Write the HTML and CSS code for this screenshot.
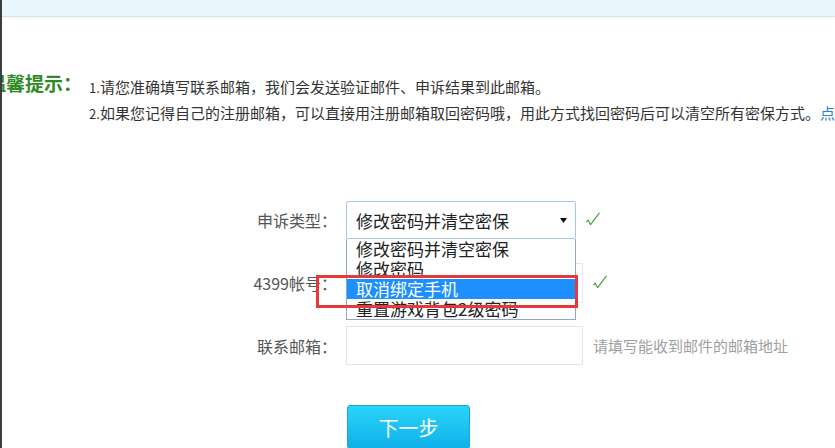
FILE: index.html
```html
<!DOCTYPE html>
<html lang="zh-CN">
<head>
<meta charset="utf-8">
<title>申诉</title>
<link rel="stylesheet" href="styles.css">
</head>
<body>
<div class="page">
  <div class="topbar"></div>
  <div class="tips">
    <div class="tips-title">温馨提示：</div>
    <ul class="tips-list">
      <li><span class="num">1.</span>请您准确填写联系邮箱，我们会发送验证邮件、申诉结果到此邮箱。</li>
      <li><span class="num">2.</span>如果您记得自己的注册邮箱，可以直接用注册邮箱取回密码哦，用此方式找回密码后可以清空所有密保方式。<a class="link">点击</a></li>
    </ul>
  </div>
  <form class="form">
    <div class="row row-type">
      <label class="label">申诉类型：</label>
      <div class="select-wrap">
        <div class="select">
          <span>修改密码并清空密保</span>
          <svg class="arrow" width="7" height="5" viewBox="0 0 7 5"><path d="M0 0H7L3.5 5Z" fill="#111"/></svg>
        </div>
        <ul class="dropdown">
          <li>修改密码并清空密保</li>
          <li>修改密码</li>
          <li class="active">取消绑定手机</li>
          <li>重置游戏背包2级密码</li>
        </ul>
        <div class="highlight-box"></div>
      </div>
      <svg class="check" width="14" height="14" viewBox="0 0 14 14"><path d="M0.8 9.5 L2.2 8.3 L4.6 12.6 L13.2 1.2" fill="none" stroke="#48a048" stroke-width="1.2" stroke-linecap="round" stroke-linejoin="round"/></svg>
    </div>
    <div class="row row-account">
      <label class="label">4399帐号：</label>
      <div class="input"></div>
      <svg class="check" width="14" height="14" viewBox="0 0 14 14"><path d="M0.8 9.5 L2.2 8.3 L4.6 12.6 L13.2 1.2" fill="none" stroke="#48a048" stroke-width="1.2" stroke-linecap="round" stroke-linejoin="round"/></svg>
    </div>
    <div class="row row-mail">
      <label class="label">联系邮箱：</label>
      <div class="input"></div>
      <span class="hint">请填写能收到邮件的邮箱地址</span>
    </div>
    <div class="row row-btn">
      <span class="label"></span>
      <button type="button" class="btn">下一步</button>
    </div>
  </form>
</div>
</body>
</html>
```
FILE: styles.css
```css
html, body {
  margin: 0;
  padding: 0;
  background: #fff;
  overflow: hidden;
}
body {
  font-family: "Noto Sans CJK SC", "Noto Sans", sans-serif;
  color: #333;
}
.page {
  height: 448px;
  border-left: 2px solid #3d3d3d;
  overflow: hidden;
}
.topbar {
  height: 16px;
  background: #eaf7fe;
  border-bottom: 1px solid #d6e4ec;
  box-shadow: 0 1px 2px rgba(200, 220, 230, 0.35);
}
.tips {
  display: flex;
  margin-top: 57px;
  white-space: nowrap;
}
.tips-title {
  flex-shrink: 0;
  width: 102px;
  margin-left: -15px;
  margin-top: -3px;
  font-size: 19px;
  font-weight: bold;
  line-height: 24px;
  color: #2f8a26;
}
.tips-list {
  list-style: none;
  margin: 0;
  padding: 0;
  font-size: 15px;
  line-height: 25px;
  letter-spacing: 0;
  color: #333;
}
.tips-list .num {
  display: inline-block;
  width: 11px;
  font-size: 13px;
}
.link {
  color: #2b7fd6;
}
.form {
  margin-top: 75px;
  padding-left: 245px;
}
.row {
  display: flex;
  align-items: center;
}
.label {
  width: 90px;
  margin-right: 9px;
  text-align: right;
  font-size: 16px;
  color: #555;
  flex-shrink: 0;
}
.row-type {
  height: 38px;
}
.row-account {
  height: 40px;
  margin-top: 24px;
}
.row-mail {
  height: 39px;
  margin-top: 23px;
}
.row-btn {
  margin-top: 40px;
}
.select-wrap {
  position: relative;
  width: 230px;
  height: 38px;
}
.select {
  box-sizing: border-box;
  height: 38px;
  border: 1px solid #a9c6ea;
  border-radius: 2px;
  display: flex;
  align-items: center;
  justify-content: space-between;
  padding: 0 8px 0 9px;
  font-size: 17px;
  color: #222;
  background: #fff;
}
.arrow {
  display: block;
}
.dropdown {
  position: absolute;
  top: 38px;
  left: 0;
  z-index: 2;
  box-sizing: border-box;
  width: 230px;
  margin: 0;
  padding: 0;
  list-style: none;
  background: #fff;
  border: 1px solid #8ea6c6;
  border-top: none;
}
.dropdown li {
  height: 20px;
  line-height: 19px;
  padding-left: 9px;
  font-size: 17px;
  color: #222;
  overflow: hidden;
  white-space: nowrap;
}
.dropdown li.active {
  background: #1e8fff;
  color: #fff;
}
.highlight-box {
  position: absolute;
  z-index: 3;
  left: -30px;
  top: 74px;
  width: 262px;
  height: 33px;
  box-sizing: border-box;
  border: 3px solid #e5393c;
}
.input {
  box-sizing: border-box;
  width: 237px;
  height: 100%;
  border: 1px solid #dfe6ee;
  background: #fff;
}
.check {
  display: block;
  margin-left: 10px;
  margin-top: -3px;
}
.hint {
  margin-left: 10px;
  font-size: 15px;
  color: #a0a0a0;
  white-space: nowrap;
}
.btn {
  margin-left: 1px;
  width: 123px;
  height: 44px;
  border: 1px solid #1ba5d9;
  border-radius: 3px;
  background: linear-gradient(#2ad4f8, #10b1ea);
  color: #fff;
  font-family: "Noto Sans CJK SC", sans-serif;
  font-size: 20px;
  padding: 0;
  cursor: pointer;
}
```
